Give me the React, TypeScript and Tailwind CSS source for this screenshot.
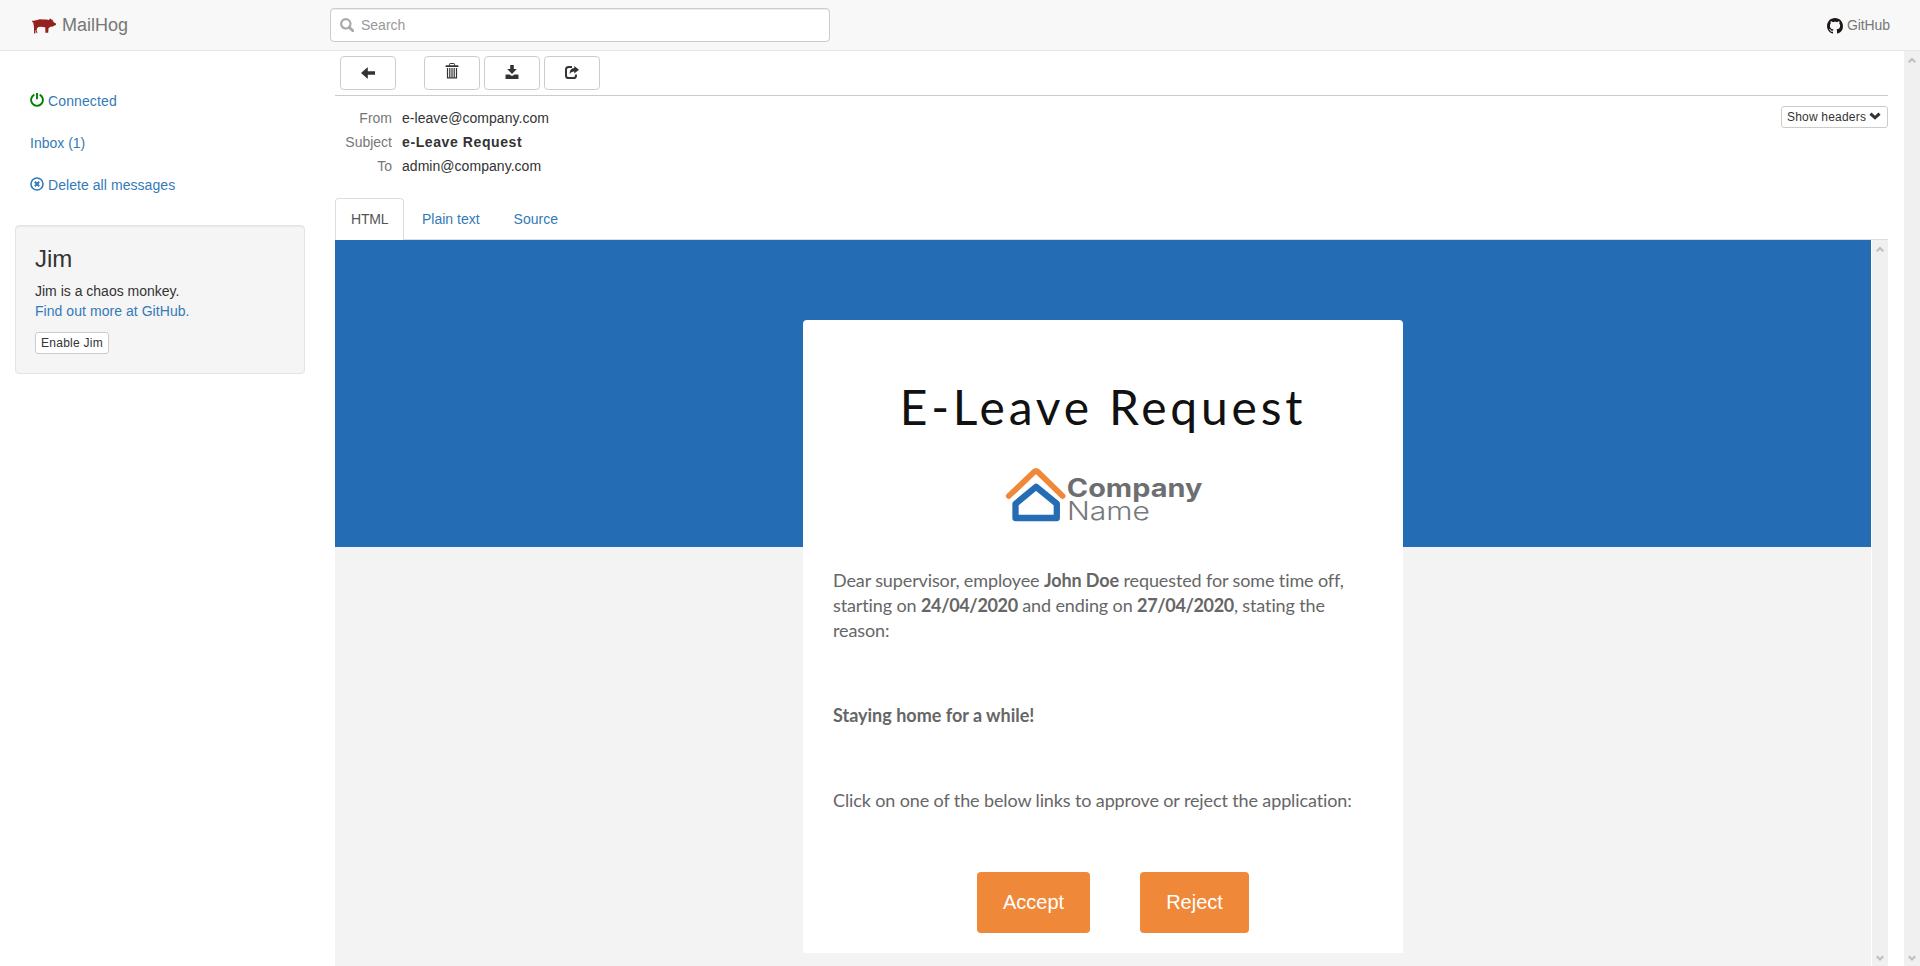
import React from "react";

const MENU = ["HTML", "Plain text", "Source"];

function Hog() {
  return (
    <svg width="24" height="16" viewBox="0 0 24 16" fill="#95211f" className="mt-0.5 block">
      <path d="M0 2.4 L1.6 3 L2.4 2.4 L5.5 2 L7.5 1.2 L12 1.5 L14.5 1.4 L17 2 L17.8 .8 L18.6 .6 L19.3 1.8 L20.4 1.4 L21 3 L22 4.6 L24 5.6 L24 7 L22.4 7.4 L21 8.4 L18.6 8.8 L16.6 10 L16.2 14.8 L13.2 14.8 L13.4 13.8 L13.2 9.2 L9 8.7 L6.4 9 L5 10.6 L4.6 12.4 L5.6 14.8 L4.2 14.8 L3.6 12 L3.3 12.4 L3.4 15.4 L2 15.4 L2 9.5 L1.6 6.5 L1.2 4.6 L.4 4.2 Z" />
    </svg>
  );
}

function PowerIcon() {
  return (
    <svg width="14" height="14" viewBox="0 0 14 14" fill="none" stroke="#008000" className="-mt-0.5 block">
      <path d="M4.3 1.7 A5.9 5.9 0 1 0 9.7 1.7" strokeWidth="1.9" />
      <path d="M7 0 V6.2" strokeWidth="1.9" />
    </svg>
  );
}

function RemoveIcon() {
  return (
    <svg width="14" height="14" viewBox="0 0 14 14" fill="none" stroke="#337ab7" className="-mt-0.5 block">
      <circle cx="7" cy="7" r="6" strokeWidth="1.6" />
      <path d="M4.8 4.8 L9.2 9.2 M9.2 4.8 L4.8 9.2" strokeWidth="2" />
    </svg>
  );
}

function SearchIcon() {
  return (
    <svg width="14" height="14" viewBox="0 0 14 14" fill="none" stroke="#a9a9a9" className="block">
      <circle cx="5.8" cy="5.8" r="4.7" strokeWidth="2.2" />
      <path d="M9.2 9.2 L12.8 12.8" strokeWidth="2.8" strokeLinecap="round" />
    </svg>
  );
}

function ArrowLeftIcon() {
  return (
    <svg width="14" height="14" viewBox="0 0 14 14" fill="#333" className="block">
      <path d="M0 7 L6.3 1.4 Q6.8 1.1 6.8 1.7 V5.2 H14 V8.8 H6.8 V12.3 Q6.8 12.9 6.3 12.5 Z" />
    </svg>
  );
}

function TrashIcon() {
  return (
    <svg width="14" height="16" viewBox="0 0 14 16" fill="none" stroke="#333" className="-mt-1 block">
      <path d="M4.5 2.5 V1.2 Q4.5 .5 5.2 .5 H8.8 Q9.5 .5 9.5 1.2 V2.5" strokeWidth="1" />
      <path d="M.5 4 V3.4 Q.5 2.2 1.4 2.2 H12.6 Q13.5 2.2 13.5 3.4 V4 Z" fill="#333" stroke="none" />
      <path d="M2.5 5 V14.9 H11.5 V5" strokeWidth="1.2" />
      <path d="M4.8 5 V14.5 M7 5 V14.5 M9.2 5 V14.5" strokeWidth="1.2" />
    </svg>
  );
}

function SaveIcon() {
  return (
    <svg width="14" height="14" viewBox="0 0 14 14" fill="#333" className="-mt-0.5 block">
      <path d="M5.2 0 H8.8 V4 H11.8 L7 9 L2.2 4 H5.2 Z" />
      <path d="M1 9.6 H4.4 L7 11 L9.6 9.6 H13 Q13.5 9.6 13.5 10.2 V13.4 Q13.5 14 13 14 H1 Q.5 14 .5 13.4 V10.2 Q.5 9.6 1 9.6 Z" />
    </svg>
  );
}

function ShareIcon() {
  return (
    <svg width="14" height="14" viewBox="0 0 14 14" className="-mt-0.5 block">
      <path d="M7 2 H3.6 Q1 2 1 4.6 V10.4 Q1 13 3.6 13 H8.4 Q11 13 11 10.4 V9.4" fill="none" stroke="#333" strokeWidth="2" />
      <path d="M9.3 .9 L14 4.7 L9.3 8.5 V6.4 Q6 6.2 4.6 8.9 Q4.6 3.4 9.3 3.1 Z" fill="#333" />
    </svg>
  );
}

function ChevronDownIcon() {
  return (
    <svg width="12" height="8" viewBox="0 0 12 8" fill="#333" className="-mt-0.5 block">
      <path d="M.4 2.8 L2.5 .6 L6 3.8 L9.5 .6 L11.6 2.8 L6 7.8 Z" />
    </svg>
  );
}

function GithubMark() {
  return (
    <svg width="16" height="16" viewBox="0 0 16 16" fill="#1b1817" className="mt-px block">
      <path d="M8 0C3.58 0 0 3.58 0 8c0 3.54 2.29 6.53 5.47 7.59.4.07.55-.17.55-.38 0-.19-.01-.82-.01-1.49-2.01.37-2.53-.49-2.69-.94-.09-.23-.48-.94-.82-1.13-.28-.15-.68-.52-.01-.53.63-.01 1.08.58 1.23.82.72 1.21 1.87.87 2.33.66.07-.52.28-.87.51-1.07-1.78-.2-3.64-.89-3.64-3.95 0-.87.31-1.59.82-2.15-.08-.2-.36-1.02.08-2.12 0 0 .67-.21 2.2.82.64-.18 1.32-.27 2-.27s1.36.09 2 .27c1.53-1.04 2.2-.82 2.2-.82.44 1.1.16 1.92.08 2.12.51.56.82 1.27.82 2.15 0 3.07-1.87 3.75-3.65 3.95.29.25.54.73.54 1.48 0 1.07-.01 1.93-.01 2.2 0 .21.15.46.55.38A8.01 8.01 0 0 0 16 8c0-4.42-3.58-8-8-8Z" />
    </svg>
  );
}

function ScrollBar() {
  return (
    <div className="flex w-4 shrink-0 flex-col items-center justify-between bg-[#f0f0f0] pb-1 pt-1.5">
      <svg width="8" height="7" viewBox="0 0 8 7" fill="none" stroke="#bfbfbf" strokeWidth="2.2">
        <path d="M.7 5.3 L4 2 L7.3 5.3" />
      </svg>
      <svg width="8" height="7" viewBox="0 0 8 7" fill="none" stroke="#bfbfbf" strokeWidth="2.2">
        <path d="M.7 1.2 L4 4.5 L7.3 1.2" />
      </svg>
    </div>
  );
}

function CompanyLogo() {
  return (
    <svg width="210" height="60" viewBox="1003 464 210 60" className="block overflow-visible">
      <path d="M1008.8 496 L1034.4 471.6 Q1036 470.2 1037.6 471.6 L1062.6 496" fill="none" stroke="#f0883a" strokeWidth="5.8" strokeLinecap="round" />
      <path d="M1015.5 503.8 L1036 486.8 L1056.8 503.8 V518 H1015.5 Z" fill="none" stroke="#246cb4" strokeWidth="6.3" strokeLinejoin="round" />
      <text x="1066.8" y="496.8" fill="#6d6e71" fontFamily="Inter, sans-serif" fontWeight="650" fontSize="25" textLength="135.5" lengthAdjust="spacingAndGlyphs">Company</text>
      <text x="1067" y="520" fill="#77787b" fontFamily="Inter, sans-serif" fontWeight="300" fontSize="25.5" textLength="83" lengthAdjust="spacingAndGlyphs">Name</text>
    </svg>
  );
}

function ToolButton({ children }: { children: React.ReactNode }) {
  return (
    <button className="flex h-[34px] w-14 items-center justify-center rounded border border-[#ccc] bg-white">
      {children}
    </button>
  );
}

function HeaderRow({ label, value, bold }: { label: string; value: string; bold?: boolean }) {
  return (
    <div className="flex h-6 items-center">
      <span className="w-[57px] text-right text-[#777]">{label}</span>
      <span className={bold ? "ml-2.5 font-bold tracking-[0.6px]" : "ml-2.5 tracking-[0.04px]"}>{value}</span>
    </div>
  );
}

function Sidebar() {
  return (
    <aside className="w-80 shrink-0 px-[15px] pt-[30px]">
      <nav className="flex flex-col gap-0.5 text-[#337ab7]">
        <a className="flex h-10 items-center px-[15px]">
          <PowerIcon />
          <span className="ml-1 tracking-[0.12px]">Connected</span>
        </a>
        <a className="flex h-10 items-center px-[15px]">Inbox (1)</a>
        <a className="flex h-10 items-center px-[15px]">
          <RemoveIcon />
          <span className="ml-1 tracking-[0.06px]">Delete all messages</span>
        </a>
      </nav>
      <section className="mt-5 h-[149px] rounded border border-[#e3e3e3] bg-[#f5f5f5] p-[19px] shadow-[inset_0_1px_1px_rgba(0,0,0,0.05)]">
        <h3 className="mb-[9px] pt-px text-2xl leading-[26.4px]">Jim</h3>
        <p>Jim is a chaos monkey.</p>
        <p className="mb-[10.6px] tracking-[0.05px] text-[#337ab7]">Find out more at GitHub.</p>
        <button className="block h-[22px] w-[74px] rounded-[3px] border border-[#ccc] bg-white text-xs leading-[18px] tracking-[0.25px]">
          Enable Jim
        </button>
      </section>
    </aside>
  );
}

function MailBody() {
  return (
    <div className="flex min-h-0 flex-1">
      <div className="mr-px flex flex-1 justify-center bg-[linear-gradient(#246cb4_307px,#f3f3f3_307px)] pt-20">
        <article className="h-[633px] w-[600px] rounded-t bg-white px-[30px] font-[Lato,sans-serif] text-lg leading-[25px] text-[#666] [font-variant-ligatures:none]">
          <h1 className="pt-[58px] text-center text-5xl leading-[58px] tracking-[3.8px] text-[#111]">E-Leave Request</h1>
          <div className="ml-[170px] mt-7">
            <CompanyLogo />
          </div>
          <p className="mt-11 tracking-[-0.12px]">
            <span className="block">
              Dear supervisor, employee <b>John Doe</b> requested for some time off,
            </span>
            <span className="block">
              starting on <b className="tracking-[-0.35px]">24/04/2020</b> and ending on{" "}
              <b className="tracking-[-0.35px]">27/04/2020</b>, stating the
            </span>
            <span className="block">reason:</span>
          </p>
          <p className="mt-[60px] font-bold">Staying home for a while!</p>
          <p className="mt-[60px] tracking-[-0.12px]">
            Click on one of the below links to approve or reject the application:
          </p>
          <div className="ml-36 mt-[59px] flex gap-[50px] font-['Liberation_Sans',Arial,sans-serif] text-xl text-white">
            <a className="flex h-[61px] w-[113px] items-center justify-center rounded-sm bg-[#f0883a] pb-0.5">Accept</a>
            <a className="flex h-[61px] w-[109px] items-center justify-center rounded-sm bg-[#f0883a] pb-0.5">Reject</a>
          </div>
        </article>
      </div>
      <ScrollBar />
    </div>
  );
}

export default function App() {
  return (
    <div className="flex h-[966px] w-[1920px] flex-col overflow-hidden bg-white font-['Liberation_Sans',Arial,sans-serif] text-sm leading-5 text-[#333]">
      <header className="flex h-[51px] shrink-0 items-center border-b border-[#e7e7e7] bg-[#f8f8f8] text-[#777]">
        <div className="flex w-[330px] items-center pl-8">
          <Hog />
          <span className="ml-1.5 text-lg leading-5">MailHog</span>
        </div>
        <div className="flex h-[34px] w-[500px] items-center rounded border border-[#ccc] bg-white pl-[9px] text-[#999] shadow-[inset_0_1px_1px_rgba(0,0,0,0.075)]">
          <SearchIcon />
          <span className="ml-[7px]">Search</span>
        </div>
        <a className="ml-auto mr-[30px] flex items-center gap-1 tracking-[-0.1px]">
          <GithubMark />
          GitHub
        </a>
      </header>
      <div className="flex min-h-0 flex-1">
        <Sidebar />
        <main className="flex min-w-0 flex-1 flex-col pl-[15px] pr-4">
          <div className="flex h-[45px] shrink-0 gap-1 border-b border-[#ccc] pl-[5px] pt-[5px]">
            <div className="mr-6">
              <ToolButton>
                <ArrowLeftIcon />
              </ToolButton>
            </div>
            <ToolButton>
              <TrashIcon />
            </ToolButton>
            <ToolButton>
              <SaveIcon />
            </ToolButton>
            <ToolButton>
              <ShareIcon />
            </ToolButton>
          </div>
          <div className="flex h-[102px] shrink-0 justify-between pt-2.5">
            <div>
              <HeaderRow label="From" value="e-leave@company.com" />
              <HeaderRow label="Subject" value="e-Leave Request" bold />
              <HeaderRow label="To" value="admin@company.com" />
            </div>
            <button className="flex h-[22px] w-[107px] items-center rounded-[3px] border border-[#ccc] pl-[5px] text-xs leading-[18px] tracking-[0.2px]">
              Show headers
              <span className="ml-[3px]">
                <ChevronDownIcon />
              </span>
            </button>
          </div>
          <div className="flex h-[42px] shrink-0 gap-0.5 border-b border-[#ddd]">
            {MENU.map((label, i) => (
              <a
                key={label}
                className={
                  i === 0
                    ? "-mb-px h-[42px] w-[69px] rounded-t border border-b-0 border-[#ddd] bg-white pl-[15px] pt-2.5 tracking-[-0.2px] text-[#555]"
                    : "h-[42px] px-4 pt-[11px] text-[#337ab7]"
                }
              >
                {label}
              </a>
            ))}
          </div>
          <MailBody />
        </main>
        <ScrollBar />
      </div>
    </div>
  );
}
